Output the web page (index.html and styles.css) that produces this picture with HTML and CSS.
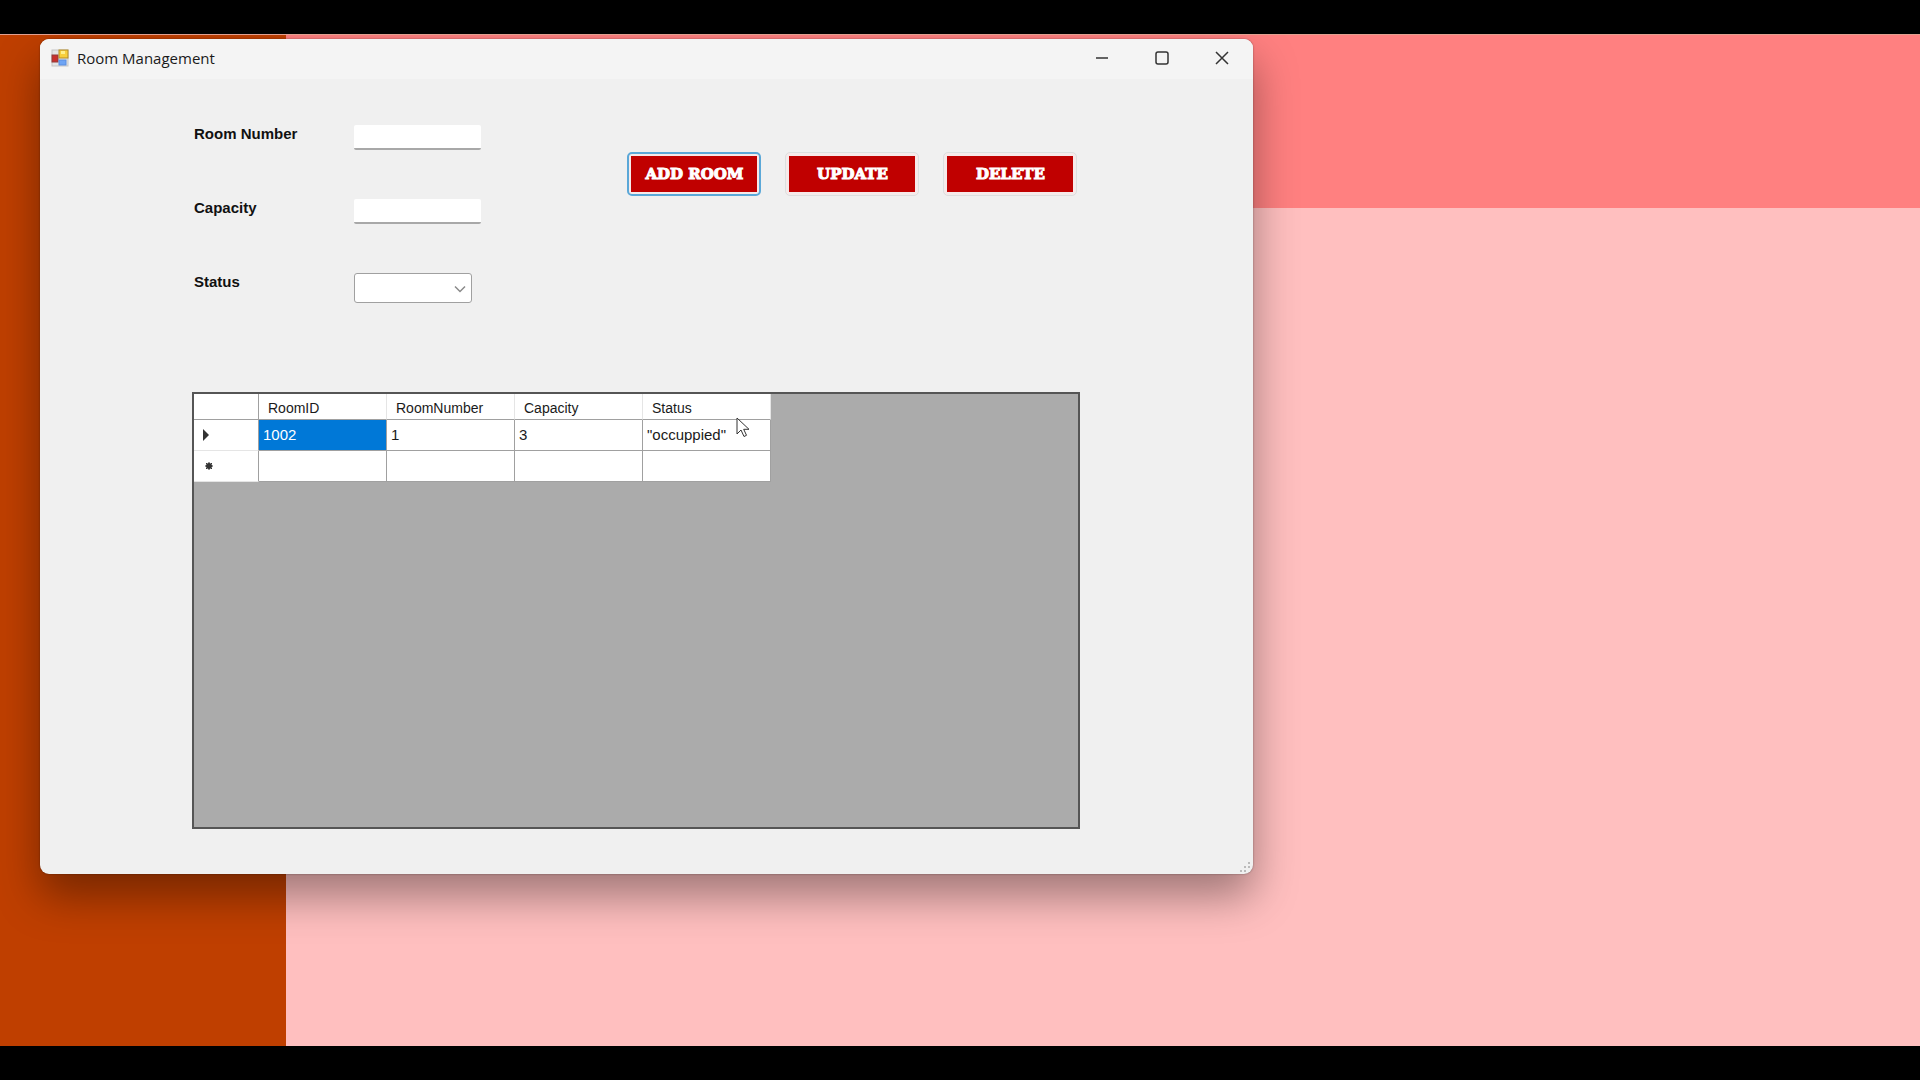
FILE: index.html
```html
<!DOCTYPE html>
<html lang="en">
<head>
<meta charset="utf-8">
<title>Room Management</title>
<link rel="stylesheet" href="styles.css">
</head>
<body>
<div class="desktop">
  <div class="sidebar"></div>
  <div class="main"><div class="banner"></div></div>
  <section class="window" aria-label="Room Management">
    <header class="titlebar">
      <svg class="app-icon" width="18" height="18" viewBox="0 0 18 18" aria-hidden="true">
        <rect x="1" y="1" width="16" height="16" fill="#e4e4e4" stroke="#c4c4c4"/>
        <rect x="1" y="6" width="6" height="7" fill="#c9302c" stroke="#8f3a3a"/>
        <rect x="8" y="1" width="9" height="8" fill="#f8cf3c" stroke="#b58d2b"/>
        <rect x="10" y="2" width="4" height="3" fill="#fff08a"/>
        <rect x="8" y="11" width="7" height="5" fill="#6ea4f4" stroke="#5b8ee0"/>
      </svg>
      <h1 class="title">Room Management</h1>
      <div class="controls">
        <button class="control" type="button" aria-label="Minimize"><svg width="14" height="14" viewBox="0 0 14 14"><path d="M1 7h12"/></svg></button>
        <button class="control" type="button" aria-label="Maximize"><svg width="14" height="14" viewBox="0 0 14 14"><rect x="1" y="1" width="12" height="12" rx="2"/></svg></button>
        <button class="control" type="button" aria-label="Close"><svg width="14" height="14" viewBox="0 0 14 14"><path d="M1 1l12 12M13 1L1 13"/></svg></button>
      </div>
    </header>
    <div class="content">
      <form class="form">
        <div class="fields">
          <label for="number">Room Number</label><input class="textbox" id="number" type="text">
          <label for="capacity">Capacity</label><input class="textbox" id="capacity" type="text">
          <label for="status">Status</label>
          <div class="combo">
            <select id="status"><option></option><option>occuppied</option></select>
            <svg class="chevron" width="12" height="8" viewBox="0 0 12 8" aria-hidden="true"><path d="M1 1.5l5 5 5-5"/></svg>
          </div>
        </div>
        <div class="actions">
          <button class="action focused" type="button"><span>ADD ROOM</span></button>
          <button class="action" type="button"><span>UPDATE</span></button>
          <button class="action" type="button"><span>DELETE</span></button>
        </div>
      </form>
      <div class="grid-view">
        <table class="rooms">
          <thead>
            <tr><th class="marker"></th><th>RoomID</th><th>RoomNumber</th><th>Capacity</th><th>Status</th></tr>
          </thead>
          <tbody>
            <tr>
              <td class="marker"><svg width="8" height="12" viewBox="0 0 8 12" aria-hidden="true"><path d="M1 0l6 6-6 6z"/></svg></td>
              <td class="selected">1002</td><td>1</td><td>3</td><td>"occuppied"</td>
            </tr>
            <tr>
              <td class="marker new"><svg width="8" height="8" viewBox="0 0 8 8" aria-hidden="true"><circle cx="4" cy="4" r="3"/><path class="rays" d="M4 0v8M0 4h8M1 1l6 6M7 1L1 7"/></svg></td>
              <td></td><td></td><td></td><td></td>
            </tr>
          </tbody>
        </table>
      </div>
    </div>
    <svg class="grip" width="12" height="12" viewBox="0 0 12 12" aria-hidden="true"><path d="M9 1h2v2H9zM5 5h2v2H5zM9 5h2v2H9zM1 9h2v2H1zM5 9h2v2H5z"/></svg>
  </section>
  <svg class="pointer" width="14" height="21" viewBox="0 0 14 21" aria-hidden="true"><path d="M1 1v16l4-4 3 6.500 2.500-1.200-2.800-6H13z"/></svg>
</div>
</body>
</html>
```
FILE: styles.css
```css
* { box-sizing: border-box; }

body {
  margin: 0;
  background: #000;
  color: #1a1a1a;
  font-family: "Liberation Sans", Arial, sans-serif;
}

.desktop {
  position: relative;
  display: flex;
  min-height: calc(100vh - 68px);
  margin: 34px 0;
  overflow: hidden;
  border-top: 1px solid #e0a090;
  background: #ffbfbf;
}

.sidebar { width: 286px; background: #bf3f00; }
.main { flex: 1; }
.banner { height: 173px; background: #ff8080; }

.window {
  position: absolute;
  top: 4px;
  left: 40px;
  width: 63.2%;
  border-radius: 9px;
  background: #f0f0f0;
  box-shadow: 0 0 2px rgba(0, 0, 0, .4), 0 22px 44px rgba(0, 0, 0, .38);
}

.titlebar {
  display: flex;
  align-items: center;
  height: 40px;
  padding: 0 1px 2px 11px;
  border-radius: 9px 9px 0 0;
  background: #f4f4f4;
}

.title {
  flex: 1;
  margin: 0 0 0 8px;
  font: 400 15px/20px "Open Sans", sans-serif;
}

.controls { display: flex; }

.control {
  display: grid;
  place-items: center;
  width: 60px;
  height: 38px;
  padding: 0;
  border: 0;
  background: none;
}

.control svg { fill: none; stroke: #333; stroke-width: 1.5; }

.content { padding: 46px 173px 45px 152px; }

.form {
  display: flex;
  justify-content: space-between;
  height: 267px;
  padding-right: 3px;
}

.fields {
  display: grid;
  grid-template-columns: 160px 127px;
  grid-template-rows: 25px 25px 30px;
  align-content: start;
  row-gap: 49px;
  padding-left: 2px;
}

.fields label {
  color: #111;
  font-size: 15px;
  font-weight: 700;
  line-height: 18px;
}

.textbox {
  height: 25px;
  padding: 2px 4px;
  border: 0;
  border-bottom: 2px solid #a8a8a8;
  border-radius: 2px;
  background: #fff;
  font: inherit;
}

.combo { position: relative; width: 118px; height: 30px; }

.combo select {
  width: 100%;
  height: 100%;
  padding: 0 24px 0 6px;
  appearance: none;
  border: 1px solid #a0a0a0;
  border-radius: 3px;
  background: #fff;
}

.chevron {
  position: absolute;
  top: 12px;
  right: 6px;
  fill: none;
  stroke: #8a8a8a;
  stroke-width: 1.5;
  pointer-events: none;
}

.actions {
  display: flex;
  align-items: flex-start;
  gap: 24px;
  padding-top: 27px;
}

.action {
  width: 134px;
  height: 44px;
  padding: 3px;
  border: 1px solid #dcdfdf;
  border-radius: 5px;
  background: #f6eaea;
  color: #fff;
  font: 700 15px/20px "DejaVu Serif", serif;
}

.action span {
  display: grid;
  place-items: center;
  height: 100%;
  background: #c00000;
  -webkit-text-stroke: 1px #fff;
}

.action.focused { border: 2px solid #5ba8d8; padding: 2px; }

.grid-view {
  min-height: 437px;
  border: 2px solid #555;
  background: #ababab;
}

.rooms {
  border-collapse: separate;
  border-spacing: 0;
  table-layout: fixed;
  width: 577px;
  background: #fff;
  font-size: 15px;
  line-height: 20px;
}

.rooms th, .rooms td {
  width: 128px;
  height: 31px;
  padding: 0 4px;
  border-right: 1px solid #a0a0a0;
  border-bottom: 1px solid #a0a0a0;
  font-weight: 400;
  text-align: left;
}

.rooms th { height: 26px; padding: 2px 9px 0; border-right-color: #e5e5e5; font-size: 14px; }
.rooms .marker { width: 65px; padding: 0 8px; border-right-color: #a0a0a0; }
.rooms td.marker { border-bottom-color: #e5e5e5; }
.rooms .new { padding-left: 11px; }
.rooms .selected { background: #0078d7; color: #fff; }
.marker svg { display: block; fill: #333; }
.rays { stroke: #333; }

.grip { position: absolute; right: 2px; bottom: 1px; fill: #bbb; }

.pointer {
  position: absolute;
  top: 382px;
  left: 736px;
  fill: #fff;
  stroke: #333;
}
```
